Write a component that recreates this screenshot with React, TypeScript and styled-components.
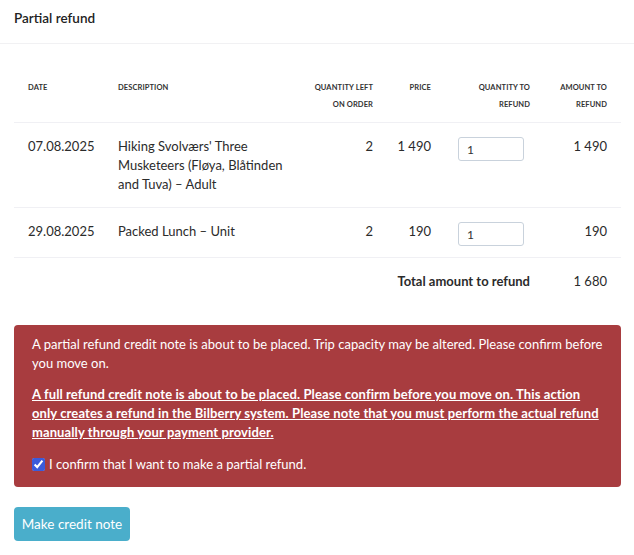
import React from "react";
import styled, { createGlobalStyle } from "styled-components";

const Global = createGlobalStyle`
  html, body { margin: 0; padding: 0; background: #fff; }
  body { font-family: "Lato", "Inter", sans-serif; color: #2b2b2b; -webkit-font-smoothing: antialiased; }
  * { box-sizing: border-box; }
`;

const Page = styled.div`
  width: 634px;
  display: flex;
  flex-direction: column;
`;

const Header = styled.div`
  height: 44px;
  border-bottom: 1px solid #f1f1f3;
  padding: 9px 14px 0;
`;

const Title = styled.h2`
  margin: 0;
  font-size: 13.5px;
  font-weight: 600;
  line-height: 19px;
  color: #222;
`;

const Body = styled.div`
  padding: 20px 13px 0 14px;
  display: flex;
  flex-direction: column;
`;

const Table = styled.table`
  width: 607px;
  border-collapse: collapse;
  table-layout: fixed;
`;

const Th = styled.th<{ $align?: "left" | "right" }>`
  text-align: ${(p) => p.$align || "left"};
  font-size: 7.5px;
  font-weight: 700;
  text-transform: uppercase;
  letter-spacing: 0.1px;
  line-height: 17px;
  color: #333;
  padding: 15px 14px 9px ${(p) => (p.$align === "right" ? "8px" : "14px")};
  vertical-align: top;
  border-bottom: 1px solid #f0f0f4;
`;

const Td = styled.td<{ $align?: "left" | "right"; $bold?: boolean; $noBorder?: boolean }>`
  text-align: ${(p) => p.$align || "left"};
  font-size: 13px;
  font-weight: ${(p) => (p.$bold ? 700 : 400)};
  line-height: 19px;
  color: #2b2b2b;
  padding: 14px 14px 13px ${(p) => (p.$align === "right" ? "0" : "14px")};
  vertical-align: top;
  white-space: ${(p) => (p.$align === "right" ? "nowrap" : "normal")};
  border-bottom: ${(p) => (p.$noBorder ? "none" : "1px solid #f0f0f4")};
`;

const InputCell = styled.td`
  padding: 14px 0 11px 13px;
  vertical-align: top;
  border-bottom: 1px solid #f0f0f4;
`;

const QtyInput = styled.input`
  display: block;
  width: 66px;
  height: 24px;
  border: 1px solid #c9d2dc;
  border-radius: 3px;
  padding: 0 8px;
  font-family: "Lato", sans-serif;
  font-size: 12px;
  color: #333;
  outline: none;
`;

const Alert = styled.div`
  margin-top: 21px;
  background: #a83c3f;
  border-radius: 4px;
  padding: 10px 18px 13px;
  color: #fff;
  font-size: 13px;
  line-height: 19px;
  display: flex;
  flex-direction: column;
  gap: 12px;
`;

const Para = styled.p<{ $strong?: boolean }>`
  margin: 0;
  font-weight: ${(p) => (p.$strong ? 700 : 400)};
  letter-spacing: ${(p) => (p.$strong ? "0.1px" : "0")};
  text-decoration: ${(p) => (p.$strong ? "underline" : "none")};
`;

const ConfirmLabel = styled.label`
  display: flex;
  align-items: center;
  gap: 4px;
  padding-top: 1px;
`;

const Check = styled.input`
  margin: 0;
  width: 13px;
  height: 13px;
  accent-color: #3b5bdb;
`;

const Button = styled.button`
  margin-top: 20px;
  align-self: flex-start;
  width: 116px;
  height: 34px;
  border: none;
  border-radius: 4px;
  background: #4aaecb;
  color: #fff;
  font-family: "Lato", sans-serif;
  font-size: 13.5px;
  padding: 0;
`;

const rows = [
  { date: "07.08.2025", desc: "Hiking Svolværs' Three Musketeers (Fløya, Blåtinden and Tuva) – Adult", left: 2, price: "1 490", amount: "1 490" },
  { date: "29.08.2025", desc: "Packed Lunch – Unit", left: 2, price: "190", amount: "190" },
];

export default function App() {
  return (
    <Page>
      <Global />
      <Header>
        <Title>Partial refund</Title>
      </Header>
      <Body>
        <Table>
          <colgroup>
            <col style={{ width: 90 }} />
            <col style={{ width: 200 }} />
            <col style={{ width: 83 }} />
            <col style={{ width: 58 }} />
            <col style={{ width: 99 }} />
            <col style={{ width: 77 }} />
          </colgroup>
          <thead>
            <tr>
              <Th>Date</Th>
              <Th>Description</Th>
              <Th $align="right">Quantity left on order</Th>
              <Th $align="right">Price</Th>
              <Th $align="right">Quantity to refund</Th>
              <Th $align="right">Amount to refund</Th>
            </tr>
          </thead>
          <tbody>
            {rows.map((r) => (
              <tr key={r.date}>
                <Td>{r.date}</Td>
                <Td>{r.desc}</Td>
                <Td $align="right">{r.left}</Td>
                <Td $align="right">{r.price}</Td>
                <InputCell>
                  <QtyInput defaultValue="1" />
                </InputCell>
                <Td $align="right">{r.amount}</Td>
              </tr>
            ))}
            <tr>
              <Td colSpan={5} $align="right" $bold $noBorder>
                Total amount to refund
              </Td>
              <Td $align="right" $noBorder>
                1 680
              </Td>
            </tr>
          </tbody>
        </Table>
        <Alert>
          <Para>
            A partial refund credit note is about to be placed. Trip capacity may be altered. Please confirm before you move on.
          </Para>
          <Para $strong>
            A full refund credit note is about to be placed. Please confirm before you move on. This action only creates a refund in the Bilberry system. Please note that you must perform the actual refund manually through your payment provider.
          </Para>
          <ConfirmLabel>
            <Check type="checkbox" defaultChecked />
            I confirm that I want to make a partial refund.
          </ConfirmLabel>
        </Alert>
        <Button>Make credit note</Button>
      </Body>
    </Page>
  );
}
